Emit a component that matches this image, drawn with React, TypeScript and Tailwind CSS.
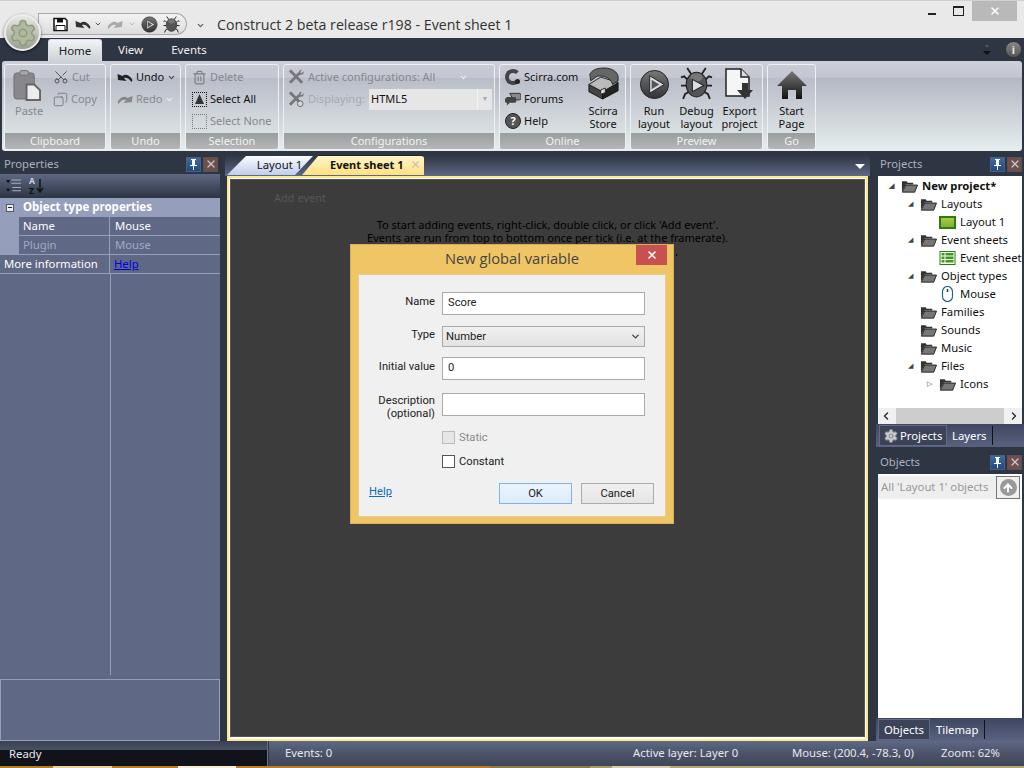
import type { ReactNode } from "react";
import { Scissors, Copy, Trash2, X, ChevronDown, ChevronLeft, ChevronRight, Settings, ArrowUp } from "lucide-react";

const UI = "font-['Noto_Sans',sans-serif]";

function Folder() {
  return (
    <svg width="17" height="14" viewBox="0 0 18 14" className="shrink-0">
      <path d="M1 13V2h5l1 1.500h6v2H5L1 13z" fill="#333" />
      <path d="M1.500 13.500 5 6h12.500l-3 7.500z" fill="#777" stroke="#222" />
    </svg>
  );
}

function Tools({ eye }: { eye?: boolean }) {
  return (
    <svg width="17" height="18" viewBox="0 0 18 18" className="shrink-0">
      <path d="M2 15 12 5M3 3l12 12" stroke="#77777c" strokeWidth="3" />
      <path d="M11 6l1-4 3-1-2 3 1 1 3-2-1 3-4 1z" fill="#77777c" />
      <path d="M1 3l2-2 2 2-2 2z" fill="#77777c" />
      {eye && <circle cx="13" cy="14" r="3" fill="#d5d8dc" stroke="#666" />}
    </svg>
  );
}

function UndoArrow({ color, flip }: { color: string; flip?: boolean }) {
  return (
    <svg width="16" height="11" viewBox="0 0 16 11" className={flip ? "shrink-0 -scale-x-100" : "shrink-0"}>
      <path d="M1 8 0.500 2l5 2C8 2 12 2 15.500 8l-1 2C12 6 9 5 7 6l2.500 3z" fill={color} />
    </svg>
  );
}

function PlayCircle({ size }: { size: number }) {
  return (
    <svg width={size} height={size} viewBox="0 0 32 32" className="shrink-0">
      <defs>
        <linearGradient id="pc" x1="0" y1="0" x2="0" y2="1">
          <stop offset="0" stopColor="#777" />
          <stop offset="1" stopColor="#333" />
        </linearGradient>
      </defs>
      <circle cx="16" cy="16" r="14.500" fill="url(#pc)" stroke="#222" />
      <path d="M11 7l15 9-15 9z" fill="#d9dde0" stroke="#222" />
      <path d="M13 11l8 5-8 5z" fill="#555" />
    </svg>
  );
}

function Bug({ size, play }: { size: number; play?: boolean }) {
  return (
    <svg width={size} height={size} viewBox="0 0 32 32" className="shrink-0">
      <g stroke="#222" strokeWidth="1.800" fill="none">
        <path d="M11 7 7 1M21 7l4-6" />
        <path d="M8 13 4 9 1 10M24 13l4-4 3 1" />
        <path d="M7 18H1M25 18h6" />
        <path d="M9 24l-4 2-2 5M23 24l4 2 2 5" />
      </g>
      <ellipse cx="16" cy="17" rx="10" ry="12" fill="#555" stroke="#222" />
      <ellipse cx="16" cy="10" rx="6" ry="4" fill="#777" />
      {play && <path d="M12 12l11 6-11 6z" fill="#d9dde0" stroke="#222" />}
    </svg>
  );
}

function Paste() {
  return (
    <svg width="29" height="31" viewBox="0 0 30 32" className="shrink-0">
      <rect x="1" y="3" width="21" height="27" rx="3" fill="#88888c" stroke="#707074" />
      <rect x="7" y="0.500" width="9" height="5" rx="2" fill="#a5a5a9" stroke="#707074" />
      <path d="M14 15h8l6 6v10H14z" fill="#ececec" stroke="#66666a" strokeWidth="2" />
    </svg>
  );
}

function Chest() {
  return (
    <svg width="31" height="33" viewBox="0 0 34 36" className="shrink-0">
      <path d="M1 19l15 8v8L1 27z" fill="#444" stroke="#111" />
      <path d="M33 17 16 27v8l17-9z" fill="#222" stroke="#111" />
      <path d="M1 19 14 11l19 6-17 10z" fill="#bbb" stroke="#222" />
      <path d="M2 8C5 2 12 1 18 1c8 0 14 4 15 9l0 5-6 4C25 12 18 9 10 10L3 15z" fill="#666" stroke="#222" />
      <path d="M14 25l5-2v5l-5 2z" fill="#ddd" stroke="#222" />
    </svg>
  );
}

function ExportDoc() {
  return (
    <svg width="29" height="32" viewBox="0 0 29 32" className="shrink-0">
      <path d="M1 1h15l8 8v19H1z" fill="#f4f6f6" stroke="#222" strokeWidth="1.500" />
      <path d="M16 1v8h8" fill="#ddd" stroke="#222" strokeWidth="1.500" />
      <path d="M17 15h6v7h5l-8 9-8-9h5z" fill="#333" />
    </svg>
  );
}

function Home() {
  return (
    <svg width="30" height="30" viewBox="0 0 30 30" className="shrink-0">
      <defs>
        <linearGradient id="hm" x1="0" y1="0" x2="0" y2="1">
          <stop offset="0" stopColor="#777" />
          <stop offset="1" stopColor="#111" />
        </linearGradient>
      </defs>
      <path d="M15 1 30 16h-5v13h-6v-9h-8v9H5V16H0z" fill="url(#hm)" />
    </svg>
  );
}

function Group({ label, w, children }: { label: string; w: string; children: ReactNode }) {
  return (
    <div className={`${w} h-[86px] flex flex-col border border-[#eef0f1] rounded-[3px] overflow-hidden bg-[linear-gradient(#c9ccd5_0%,#c4c7d1_15%,#b9bdc8_16%,#e3ebeb_100%)]`}>
      <div className="flex-1 min-h-0">{children}</div>
      <div className="h-[16px] shrink-0 bg-gradient-to-b from-[#9a9d9e] to-[#b5b7b7] text-[#f2f2f2] text-[11px] leading-[16px] text-center">
        {label}
      </div>
    </div>
  );
}

function Small({ icon, text, off, faint, arrow }: { icon?: ReactNode; text: string; off?: boolean; faint?: boolean; arrow?: boolean }) {
  const color = faint ? "text-[#a6a9b1]" : off ? "text-[#85878f]" : "text-[#111]";
  return (
    <div className={`h-[22px] flex items-center gap-[3px] text-[11px] whitespace-nowrap ${color}`}>
      {icon}
      <span>{text}</span>
      {arrow && <ChevronDown size={9} strokeWidth={3} className={off ? "text-[#eee]" : "text-[#444]"} />}
    </div>
  );
}

function Big({ icon, lines, w }: { icon: ReactNode; lines: string[]; w: string }) {
  return (
    <div className={`${w} flex flex-col items-center text-[11px] leading-[13px] text-[#111]`}>
      <div className="h-[35px] flex items-end justify-center">{icon}</div>
      <div className="mt-[4px] text-center">
        {lines.map((l) => (
          <div key={l}>{l}</div>
        ))}
      </div>
    </div>
  );
}

function DockTitle({ title, h }: { title: string; h: string }) {
  return (
    <div className={`${h} shrink-0 flex items-center justify-between pr-[2px]`}>
      <span className="pl-[4px] text-[11.300px] text-[#aab0c0]">{title}</span>
      <div className="flex gap-[2px]">
        <div className="w-[15px] h-[15px] bg-gradient-to-b from-[#3f6aa0] to-[#234a7c] border border-[#4a5f80] flex items-center justify-center">
          <svg width="9" height="11" viewBox="0 0 9 11">
            <path d="M2 0h5v1H6v5h2v1H5v4H4V7H1V6h2V1H2z" fill="#fff" />
          </svg>
        </div>
        <div className="w-[15px] h-[15px] bg-[#6f4f4b] border border-[#57525a] flex items-center justify-center">
          <X size={12} strokeWidth={2.500} className="text-[#c9c9c9]" />
        </div>
      </div>
    </div>
  );
}

const treeRows: { indent: string; arrow?: "open" | "closed"; icon: string; text: string; bold?: boolean }[] = [
  { indent: "pl-[11px]", arrow: "open", icon: "folder", text: "New project*", bold: true },
  { indent: "pl-[30px]", arrow: "open", icon: "folder", text: "Layouts" },
  { indent: "pl-[49px]", icon: "layout", text: "Layout 1" },
  { indent: "pl-[30px]", arrow: "open", icon: "folder", text: "Event sheets" },
  { indent: "pl-[49px]", icon: "sheet", text: "Event sheet 1" },
  { indent: "pl-[30px]", arrow: "open", icon: "folder", text: "Object types" },
  { indent: "pl-[49px]", icon: "mouse", text: "Mouse" },
  { indent: "pl-[30px]", icon: "folder", text: "Families" },
  { indent: "pl-[30px]", icon: "folder", text: "Sounds" },
  { indent: "pl-[30px]", icon: "folder", text: "Music" },
  { indent: "pl-[30px]", arrow: "open", icon: "folder", text: "Files" },
  { indent: "pl-[49px]", arrow: "closed", icon: "folder", text: "Icons" },
];

function TreeIcon({ icon }: { icon: string }) {
  if (icon === "layout")
    return <span className="w-[17px] h-[13px] shrink-0 border-[2px] border-[#2a7d10] bg-gradient-to-b from-[#a6cc48] to-[#83b02c]" />;
  if (icon === "sheet")
    return (
      <svg width="17" height="14" viewBox="0 0 16 14" className="shrink-0">
        <rect x="0.500" y="0.500" width="15" height="13" fill="#fff" stroke="#2a7d10" />
        <path d="M2 2h3v2.500H2zM2 5.500h3V8H2zM2 9h3v2.500H2zM6 2h8v2.500H6zM6 5.500h8V8H6zM6 9h8v2.500H6z" fill="#3c9a14" />
      </svg>
    );
  if (icon === "mouse")
    return (
      <svg width="17" height="16" viewBox="0 0 16 16" className="shrink-0">
        <rect x="3" y="0.500" width="10" height="15" rx="5" fill="#fff" stroke="#1e6a7c" strokeWidth="1.200" />
        <path d="M8 3v3" stroke="#333" strokeWidth="1.500" />
      </svg>
    );
  return <Folder />;
}

function TabStrip({ children }: { children: ReactNode }) {
  return (
    <div className="h-[23px] shrink-0 flex items-stretch pl-[2px] bg-gradient-to-b from-[#3f4660] to-[#5a6280] text-[11.300px] text-white">
      {children}
    </div>
  );
}

export default function App() {
  return (
    <div className={`${UI} relative w-[1024px] h-[768px] overflow-hidden flex flex-col bg-[#2e3543]`}>
      {/* title bar */}
      <div className="h-[38px] shrink-0 bg-[#e9e9e9] border-t border-[#d0d0d0] flex items-start relative">
        <div className="ml-[38px] mt-[12px] w-[149px] h-[22px] border border-[#a9a9a9] rounded-r-full rounded-bl-[8px] bg-gradient-to-b from-[#f3f3f3] to-[#dcdcdc] flex items-center pl-[14px]">
          <svg width="15" height="15" viewBox="0 0 15 14" className="shrink-0">
            <path d="M1 1h11l2 2v10H1z" fill="#fff" stroke="#111" strokeWidth="1.500" />
            <path d="M4 1h6v4H4z" fill="#111" />
            <path d="M3 8h9v5H3z" fill="#fff" stroke="#111" />
          </svg>
          <span className="ml-[7px]">
            <UndoArrow color="#333" />
          </span>
          <ChevronDown size={8} strokeWidth={3} className="ml-[3px] text-[#555]" />
          <span className="ml-[5px]">
            <UndoArrow color="#aaa" flip />
          </span>
          <ChevronDown size={8} strokeWidth={3} className="ml-[5px] text-[#bbb]" />
          <span className="ml-[5px]">
            <PlayCircle size={17} />
          </span>
          <span className="ml-[5px]">
            <Bug size={17} />
          </span>
        </div>
        <ChevronDown size={9} strokeWidth={3} className="ml-[9px] mt-[20px] text-[#555]" />
        <span className="ml-[12px] mt-[14px] font-['Open_Sans',sans-serif] text-[14.200px] leading-[20px] text-[#333]">
          Construct 2 beta release r198 - Event sheet 1
        </span>
        <div className="ml-auto flex items-start">
          <span className="mt-[12px] w-[8px] h-[2px] bg-[#222]" />
          <span className="mt-[5px] ml-[17px] relative w-[11px] h-[10px] border border-t-[2px] border-[#222] bg-[#e9e9e9]" />
          <div className="ml-[8px] mr-[7px] w-[45px] h-[20px] bg-[#b9b9b9] flex items-center justify-center">
            <X size={12} strokeWidth={3} className="text-white" />
          </div>
        </div>
      </div>

      {/* ribbon tabs */}
      <div className="h-[23px] shrink-0 flex items-end text-[11.500px] text-[#f0f0f0] relative">
        <div className="ml-[48px] w-[54px] h-[22px] rounded-t-[3px] bg-gradient-to-b from-[#f2f4f5] to-[#ccd3d6] text-[#222] flex items-center justify-center border-t border-x border-[#dde]">
          Home
        </div>
        <span className="ml-[16px] h-[22px] leading-[22px]">View</span>
        <span className="ml-[28px] h-[22px] leading-[22px]">Events</span>
        <div className="absolute right-[2px] top-[1px] flex items-center gap-[14px] h-[21px]">
          <svg width="8" height="13" viewBox="0 0 8 13">
            <path d="M4 1 6 4H2z" fill="#555" />
            <path d="M0 8h8l-4 4z" fill="#111" />
          </svg>
          <span className="w-[17px] h-[17px] rounded-full bg-gradient-to-b from-[#888] to-[#555] border border-[#333] text-[#e5e5e5] text-[11px] font-bold leading-[15px] text-center">
            i
          </span>
        </div>
      </div>

      {/* ribbon */}
      <div className="h-[90px] shrink-0 mx-[2px] flex gap-[4px] pl-[2px] pt-[3px] rounded-[3px] bg-[linear-gradient(#ced1da_0%,#c3c6d0_18%,#b3b7c2_19%,#e6eeee_100%)]">
        <Group label="Clipboard" w="w-[102px]">
          <div className="flex pl-[8px] pt-[1px]">
            <div className="w-[40px] flex flex-col items-start text-[11px] text-[#85878f]">
              <div className="h-[34px] pt-[4px]">
                <Paste />
              </div>
              <span className="mt-[3px] pl-[2px]">Paste</span>
            </div>
            <div>
              <Small icon={<Scissors size={16} strokeWidth={1.500} className="text-[#555] -rotate-90" />} text="Cut" off />
              <Small icon={<Copy size={15} strokeWidth={1.200} className="text-[#666] -scale-x-100" />} text="Copy" off />
            </div>
          </div>
        </Group>
        <Group label="Undo" w="w-[71px]">
          <div className="pl-[6px] pt-[1px]">
            <Small icon={<UndoArrow color="#222" />} text="Undo" arrow />
            <Small icon={<UndoArrow color="#888" flip />} text="Redo" off arrow />
          </div>
        </Group>
        <Group label="Selection" w="w-[94px]">
          <div className="pl-[6px] pt-[1px]">
            <Small icon={<Trash2 size={15} strokeWidth={2} className="text-[#808086]" />} text="Delete" off />
            <Small
              icon={
                <span className="w-[15px] h-[15px] border border-dotted border-[#111] flex items-center justify-center">
                  <span className="w-[9px] h-[10px] bg-[#333] [clip-path:polygon(50%_0,100%_100%,0_100%)]" />
                </span>
              }
              text="Select All"
            />
            <Small icon={<span className="w-[15px] h-[15px] border border-dotted border-[#777]" />} text="Select None" off />
          </div>
        </Group>
        <Group label="Configurations" w="w-[212px]">
          <div className="pl-[4px] pt-[1px]">
            <div className="flex items-center w-[180px]">
              <Small icon={<Tools />} text="Active configurations: All" off />
              <ChevronDown size={9} strokeWidth={3} className="ml-auto text-[#eee]" />
            </div>
            <div className="flex items-center">
              <div className="w-[80px]">
                <Small icon={<Tools eye />} text="Displaying:" faint />
              </div>
              <div className="ml-[1px] w-[123px] h-[21px] bg-[#e6e6e6] text-[#111] text-[11px] leading-[20px] pl-[2px] flex justify-between">
                HTML5
                <span className="w-[15px] border-l border-[#f3f3f3] text-[#aaa] text-[7px] text-center">▼</span>
              </div>
            </div>
          </div>
        </Group>
        <Group label="Online" w="w-[127px]">
          <div className="flex pl-[5px] pt-[1px]">
            <div className="w-[81px]">
              <Small
                icon={
                  <span className="relative w-[16px] h-[16px] rounded-full border-[4px] border-[#444] border-r-transparent">
                    <span className="absolute right-[-3px] bottom-[-3px] w-[5px] h-[5px] rounded-full bg-[#222]" />
                  </span>
                }
                text="Scirra.com"
              />
              <Small
                icon={
                  <svg width="16" height="16" viewBox="0 0 17 16" className="shrink-0">
                    <path d="M5 2h10a2 2 0 0 1 2 2v3a2 2 0 0 1-2 2H9z" fill="#888" stroke="#333" />
                    <path d="M2 6h8a2 2 0 0 1 2 2v2a2 2 0 0 1-2 2H5l-3 3v-3a2 2 0 0 1-2-2V8z" fill="#444" />
                  </svg>
                }
                text="Forums"
              />
              <Small
                icon={
                  <span className="w-[16px] h-[16px] rounded-full bg-[#555] border border-[#222] text-white text-[11px] font-bold leading-[14px] text-center">
                    ?
                  </span>
                }
                text="Help"
              />
            </div>
            <div className="-mt-[1px]">
              <Big icon={<Chest />} lines={["Scirra", "Store"]} w="w-[34px]" />
            </div>
          </div>
        </Group>
        <Group label="Preview" w="w-[133px]">
          <div className="flex pl-[2px]">
            <Big icon={<PlayCircle size={31} />} lines={["Run", "layout"]} w="w-[42px]" />
            <Big icon={<Bug size={33} play />} lines={["Debug", "layout"]} w="w-[43px]" />
            <Big icon={<ExportDoc />} lines={["Export", "project"]} w="w-[43px]" />
          </div>
        </Group>
        <Group label="Go" w="w-[49px]">
          <Big icon={<Home />} lines={["Start", "Page"]} w="w-full" />
        </Group>
      </div>

      {/* main */}
      <div className="flex-1 min-h-0 flex">
        {/* properties */}
        <div className="w-[220px] shrink-0 flex flex-col pt-[3px]">
          <DockTitle title="Properties" h="h-[20px]" />
          <div className="flex-1 min-h-0 bg-[#5f6885] flex flex-col text-[11.300px] text-white">
            <div className="h-[24px] shrink-0 bg-gradient-to-b from-[#5f6885] to-[#2e3543] flex items-center pl-[6px] gap-[8px]">
              <svg width="15" height="15" viewBox="0 0 14 14" className="shrink-0">
                <path d="M5 1h9M5 4h9M6 8h8M6 11h8" stroke="#aab" />
                <path d="M0 1h4L2 4zM0 9h4l-2 3z" fill="#111" />
              </svg>
              <span className="text-[8.500px] leading-[10px] font-bold flex flex-col text-[#cdd2e0]">
                <span>A</span>
                <span className="text-[#111]">Z</span>
              </span>
              <svg width="8" height="14" viewBox="0 0 8 14" className="-ml-[7px] shrink-0">
                <path d="M4 0v12M1 9l3 4 3-4" stroke="#111" strokeWidth="1.400" fill="none" />
              </svg>
            </div>
            <div className="h-[19px] shrink-0 bg-[#959eba] flex items-center pl-[6px] gap-[9px] font-bold text-[11.500px] leading-[17px]">
              <span className="w-[8px] h-[8px] bg-[#eee] border border-[#556] flex items-center justify-center">
                <span className="w-[4px] h-[1px] bg-[#222]" />
              </span>
              <span className="-mt-[2px]">Object type properties</span>
            </div>
            <div className="flex h-[19px] shrink-0 border-b border-[#959eba]">
              <div className="w-[19px] bg-[#959eba]" />
              <div className="w-[91px] border-r border-[#959eba] pl-[4px] leading-[18px]">Name</div>
              <div className="pl-[5px] leading-[18px]">Mouse</div>
            </div>
            <div className="flex h-[19px] shrink-0 border-b border-[#959eba] text-[#a3abc0]">
              <div className="w-[19px] bg-[#959eba]" />
              <div className="w-[91px] border-r border-[#959eba] pl-[4px] leading-[18px]">Plugin</div>
              <div className="pl-[5px] leading-[18px]">Mouse</div>
            </div>
            <div className="flex h-[19px] shrink-0 border-b border-[#959eba]">
              <div className="w-[110px] border-r border-[#959eba] pl-[4px] leading-[18px]">More information</div>
              <div className="pl-[4px] leading-[18px] text-[#0000e0] underline">Help</div>
            </div>
            <div className="flex-1 min-h-0 w-[111px] border-r border-[#959eba]" />
            <div className="h-[62px] shrink-0 mt-[4px] border border-[#959eba]" />
          </div>
        </div>

        {/* event sheet */}
        <div className="w-[645px] ml-[5px] shrink-0 flex flex-col pt-[4px]">
          <div className="h-[21px] shrink-0 flex items-end pl-[2px] bg-gradient-to-b from-[#2e3543] to-[#5f6885] text-[11.300px] text-[#111] relative">
            <div className="w-[86px] h-[19px] mb-[1px] bg-gradient-to-b from-[#fbfcfe] to-[#c0cdec] [clip-path:polygon(19px_0,100%_0,calc(100%-18px)_100%,0_100%)] text-center leading-[17px] pl-[19px]">
              Layout 1
            </div>
            <div className="-ml-[11px] w-[122px] h-[20px] mb-[1px] bg-gradient-to-b from-[#fff6c8] to-[#ffdf80] border-t border-[#222] rounded-tr-[3px] [clip-path:polygon(17px_0,100%_0,100%_100%,0_100%)] font-bold text-[11px] leading-[17px] pl-[28px] flex justify-between pr-[3px]">
              Event sheet 1
              <X size={11} strokeWidth={3} className="text-[#c9c4ae] mt-[3px]" />
            </div>
            <span className="absolute right-[5px] top-[9px] w-0 h-0 border-x-[5px] border-x-transparent border-t-[5px] border-t-white" />
          </div>
          <div className="flex-1 min-h-0 ml-[2px] mr-[2px] border-2 border-[#ffe88c] bg-white p-[1px] pb-[2px]">
            <div className="h-full bg-[#3c3c3c] border border-[#555] text-[11px] text-[#000] text-center leading-[13px] relative">
              <div className="absolute left-[43px] top-[11px] text-[#565656]">Add event</div>
              <div className="pt-[38px]">
                <div>To start adding events, right-click, double click, or click 'Add event'.</div>
                <div>Events are run from top to bottom once per tick (i.e. at the framerate).</div>
              </div>
              {/* end of a third line that the dialog covers */}
              <span className="absolute left-[445px] top-[74px] w-[1px] h-[2px] bg-black" />
            </div>
          </div>
        </div>

        {/* right docks */}
        <div className="w-[148px] ml-[6px] shrink-0 flex flex-col pt-[3px]">
          <DockTitle title="Projects" h="h-[20px]" />
          <div className="mt-[2px] ml-[2px] mr-[2px] h-[248px] shrink-0 bg-white flex flex-col overflow-hidden">
            <div className="flex-1 min-h-0 pt-[1px] text-[11.300px] text-[#111]">
              {treeRows.map((r) => (
                <div key={r.text} className={`h-[18px] flex items-center whitespace-nowrap ${r.indent} ${r.bold ? "font-bold" : ""}`}>
                  <span className="w-[12px] shrink-0 text-[7px] leading-[18px] text-[#444]">
                    {r.arrow === "open" ? "◢" : r.arrow === "closed" ? "▷" : ""}
                  </span>
                  <TreeIcon icon={r.icon} />
                  <span className="ml-[4px]">{r.text}</span>
                </div>
              ))}
            </div>
            <div className="h-[16px] shrink-0 flex items-center justify-between px-[2px] bg-[#f0f0f0]">
              <ChevronLeft size={12} strokeWidth={3} className="text-[#333]" />
              <span className="flex-1 h-full mx-[4px] bg-[#cdcdcd]" />
              <ChevronRight size={12} strokeWidth={3} className="text-[#333]" />
            </div>
          </div>
          <TabStrip>
            <div className="my-[1px] ml-[1px] w-[68px] border border-[#626a85] bg-[#3c4358] flex items-center gap-[1px] pl-[3px]">
              <Settings size={16} fill="#c9cbd0" strokeWidth={1.500} className="text-[#888] shrink-0" />
              <span className="mt-[1px]">Projects</span>
            </div>
            <span className="ml-[5px] pr-[6px] my-[2px] border-r border-[#111] leading-[19px]">Layers</span>
          </TabStrip>
          <div className="mt-[5px]">
            <DockTitle title="Objects" h="h-[20px]" />
          </div>
          <div className="mt-[2px] ml-[2px] mr-[2px] flex-1 min-h-0 bg-white flex flex-col pt-[2px]">
            <div className="h-[23px] shrink-0 flex">
              <div className="w-[118px] bg-[#eeeeee] text-[#999] text-[11.300px] leading-[22px] pl-[3px] whitespace-nowrap overflow-hidden">
                All 'Layout 1' objects
              </div>
              <div className="w-[24px] bg-[#f0f0f0] border border-[#777] flex items-center justify-center">
                <span className="w-[17px] h-[17px] rounded-full bg-[#9a9a9a] flex items-center justify-center">
                  <ArrowUp size={12} strokeWidth={4} className="text-white" />
                </span>
              </div>
            </div>
          </div>
          <TabStrip>
            <div className="my-[1px] w-[52px] border border-[#626a85] bg-[#3c4358] text-center leading-[19px]">Objects</div>
            <span className="ml-[6px] pr-[6px] my-[2px] border-r border-[#111] leading-[19px]">Tilemap</span>
          </TabStrip>
        </div>
      </div>

      {/* status */}
      <div className="h-[25px] shrink-0 flex text-[11.300px] text-[#e6e8ee]">
        <div className="w-[268px] flex flex-col border-r border-[#6a7088]">
          <div className="h-[9px] bg-gradient-to-b from-[#3a4152] to-[#4a5064]" />
          <div className="flex-1 bg-[#11121a] pl-[9px] leading-[8px]">Ready</div>
        </div>
        <div className="flex-1 flex items-center ml-[1px] bg-gradient-to-b from-[#5f6885] via-[#4c5369] to-[#3f4659] pl-[16px]">
          <span className="w-[348px]">Events: 0</span>
          <span className="w-[159px]">Active layer: Layer 0</span>
          <span className="w-[149px]">Mouse: (200.4, -78.3, 0)</span>
          <span>Zoom: 62%</span>
        </div>
      </div>
      {/* window behind, bottom edge */}
      <div className="h-[2px] shrink-0 flex">
        <div className="w-[53px] bg-[#b07f28]" />
        <div className="w-[59px] bg-[#e8d0a0]" />
        <div className="w-[66px] bg-[#b07f28]" />
        <div className="w-[58px] bg-[#f8f0d8]" />
        <div className="w-[254px] bg-[#b8802c]" />
        <div className="w-[100px] bg-[#8f7b45]" />
        <div className="w-[22px] bg-[#a89a70]" />
        <div className="w-[58px] bg-[#d8ccb0]" />
        <div className="flex-1 bg-[#b5a878]" />
      </div>

      {/* app button */}
      <div className="absolute left-[4px] top-[14px] w-[37px] h-[37px] rounded-full border-[2px] border-[#ececec] bg-gradient-to-b from-[#e8e8e2] to-[#9aa090] shadow-[0_1px_3px_rgba(0,0,0,0.6)] flex items-center justify-center">
        <Settings size={30} fill="#b0ba9e" strokeWidth={1.200} className="text-[#8f9a80]" />
      </div>

      {/* dialog */}
      <div className="absolute left-[350px] top-[244px] w-[324px] h-[280px] bg-[#f0c566] border border-[#d9ae55] font-['Roboto',sans-serif] text-[11.200px] text-[#222]">
        <div className="h-[29px] relative text-center font-['Open_Sans',sans-serif] text-[14.700px] leading-[26px] text-[#444]">
          New global variable
          <div className="absolute right-[6px] top-0 w-[31px] h-[20px] bg-[#c75050] flex items-center justify-center">
            <X size={12} strokeWidth={3} className="text-white" />
          </div>
        </div>
        <div className="mx-[7px] h-[243px] border border-[#e3cd95] bg-[#f0f0f0] relative pt-[17px]">
          <div className="flex items-center h-[23px]">
            <span className="w-[76px] text-right -mt-[2px]">Name</span>
            <div className="ml-[7px] w-[203px] h-[23px] bg-white border border-[#aaa] pl-[5px] leading-[19px]">Score</div>
          </div>
          <div className="flex items-center h-[21px] mt-[11px]">
            <span className="w-[76px] text-right -mt-[2px]">Type</span>
            <div className="ml-[7px] w-[203px] h-[21px] bg-gradient-to-b from-[#f0f0f0] to-[#e3e3e3] border border-[#aaa] pl-[3px] pr-[3px] flex items-center justify-between">
              <span className="mt-[2px]">Number</span>
              <ChevronDown size={11} strokeWidth={3} className="text-[#444]" />
            </div>
          </div>
          <div className="flex items-center h-[23px] mt-[10px]">
            <span className="w-[76px] text-right -mt-[2px]">Initial value</span>
            <div className="ml-[7px] w-[203px] h-[23px] bg-white border border-[#aaa] pl-[5px] leading-[19px]">0</div>
          </div>
          <div className="flex items-start h-[23px] mt-[13px]">
            <span className="w-[76px] text-right leading-[13px] pt-[1px]">
              Description
              <br />
              (optional)
            </span>
            <div className="ml-[7px] w-[203px] h-[23px] bg-white border border-[#aaa]" />
          </div>
          <div className="flex items-center gap-[4px] ml-[83px] mt-[15px] h-[13px] text-[#8b8b8b]">
            <span className="w-[13px] h-[13px] bg-[#e6e6e6] border border-[#bbb]" />
            <span className="mt-[2px]">Static</span>
          </div>
          <div className="flex items-center gap-[4px] ml-[83px] mt-[11px] h-[13px]">
            <span className="w-[13px] h-[13px] bg-white border border-[#555]" />
            <span className="mt-[2px]">Constant</span>
          </div>
          <span className="absolute left-[10px] top-[209px] text-[#0a6ccc] underline">Help</span>
          <div className="absolute left-[140px] top-[208px] w-[73px] h-[21px] border border-[#7eb4ea] bg-gradient-to-b from-[#ecf4fc] to-[#dcecfc] text-center leading-[19px]">
            OK
          </div>
          <div className="absolute left-[222px] top-[208px] w-[73px] h-[21px] border border-[#acacac] bg-gradient-to-b from-[#f0f0f0] to-[#e5e5e5] text-center leading-[19px]">
            Cancel
          </div>
        </div>
      </div>
    </div>
  );
}
